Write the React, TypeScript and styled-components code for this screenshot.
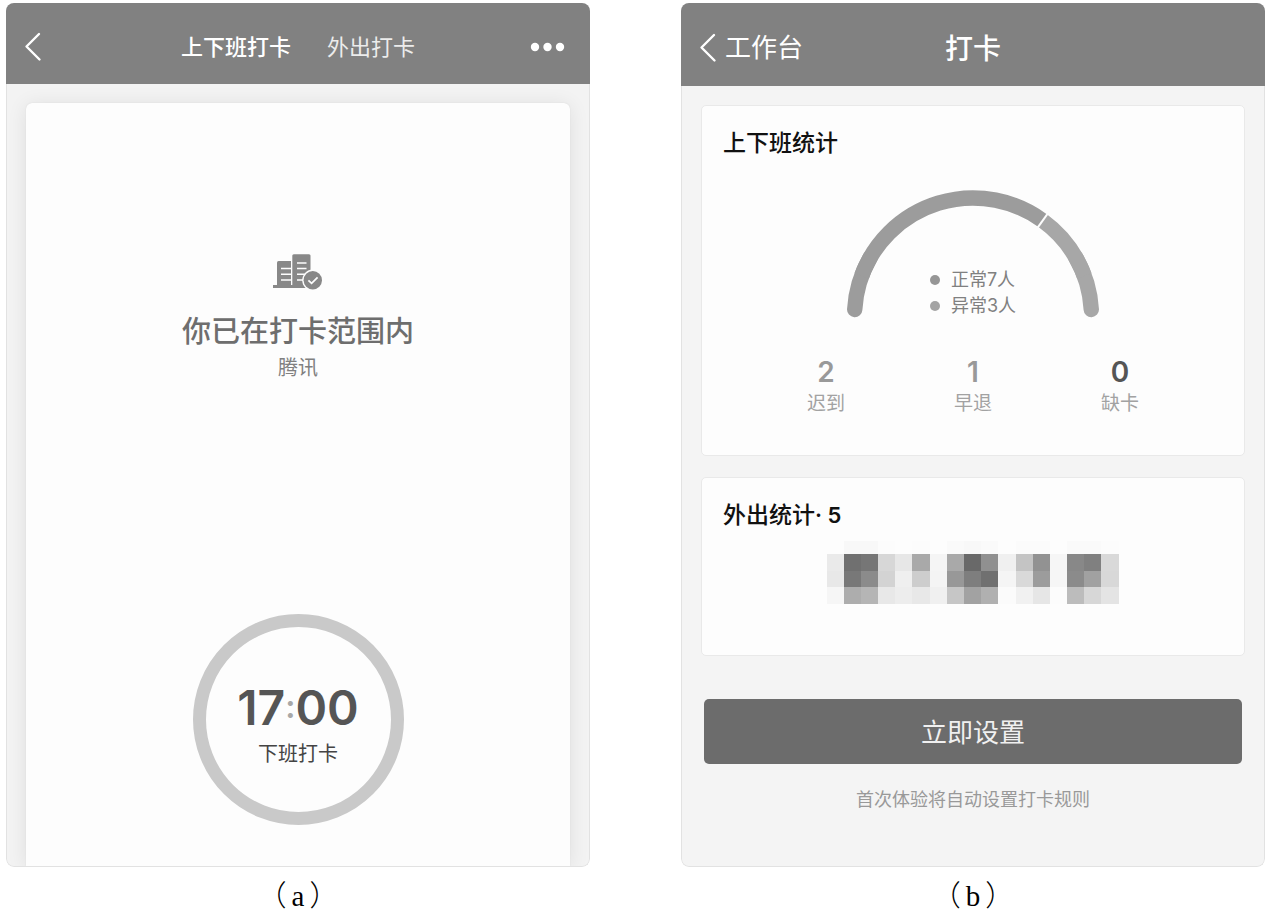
import React from "react";
import styled, { createGlobalStyle } from "styled-components";

const GlobalStyle = createGlobalStyle`
  * { box-sizing: border-box; }
  body {
    margin: 0;
    background: #fff;
    font-family: Inter, "Noto Sans CJK SC", sans-serif;
  }
  button { font: inherit; border: 0; background: none; padding: 0; cursor: pointer; }
  h1, h2, p, dl, dd, dt, figure { margin: 0; font-weight: 400; }
  svg { display: block; }
`;

const Page = styled.main`
  display: grid;
  grid-template-columns: 1fr 1fr;
  column-gap: 91px;
  padding: 3px 12px 0 6px;
`;

const Figure = styled.figure`
  display: flex;
  flex-direction: column;
  min-width: 0;
`;

const Caption = styled.figcaption`
  margin-top: 12px;
  text-align: center;
  font-family: "Liberation Serif", "Noto Sans CJK SC", serif;
  font-size: 29px;
  font-weight: 300;
  line-height: 34px;
  color: #000;
`;

const CaptionLetter = styled.span`
  margin: 0 5px;
`;

const Phone = styled.section`
  flex: 1;
  display: flex;
  flex-direction: column;
  border-radius: 8px;
  overflow: hidden;
`;

const Header = styled.header<{ $height: number }>`
  display: grid;
  grid-template-columns: 1fr auto 1fr;
  align-items: center;
  min-height: ${(p) => p.$height}px;
  padding: 6px 18px 0;
  background: #818181;
  color: #fff;
`;

const BackButton = styled.button`
  display: flex;
  align-items: center;
  justify-self: start;
  gap: 6px;
  color: #fff;
  font-size: 26px;
  line-height: 36px;
`;

const MoreButton = styled.button`
  justify-self: end;
  color: #fff;
`;

const Tabs = styled.nav`
  display: flex;
  gap: 36px;
`;

const Tab = styled.button<{ $active?: boolean }>`
  color: ${(p) => (p.$active ? "#fff" : "#ececec")};
  font-size: 22px;
  font-weight: ${(p) => (p.$active ? 500 : 400)};
  line-height: 32px;
`;

const HeaderTitle = styled.h1`
  padding-top: 2px;
  font-size: 28px;
  font-weight: 500;
  line-height: 36px;
`;

const Body = styled.div<{ $flush?: boolean }>`
  flex: 1;
  display: flex;
  flex-direction: column;
  padding: ${(p) => (p.$flush ? "19px 19px 0" : "19px 19px 53px")};
  border: 1px solid #e2e2e2;
  border-top: 0;
  border-radius: 0 0 8px 8px;
  overflow: hidden;
  background: ${(p) => (p.$flush ? "#f3f3f3" : "#f4f4f4")};
`;

const PunchCard = styled.div`
  flex: 1;
  display: flex;
  flex-direction: column;
  align-items: center;
  padding: 151px 20px 41px;
  border-radius: 6px 6px 0 0;
  background: #fdfdfd;
  box-shadow: 0 0 1px #ccc, 0 2px 20px rgba(0, 0, 0, 0.09);
`;

const RangeTitle = styled.h2`
  margin-top: 22px;
  color: #6e6e6e;
  font-size: 29px;
  font-weight: 500;
  line-height: 40px;
`;

const Company = styled.p`
  margin-top: 2px;
  color: #808080;
  font-size: 20px;
  line-height: 28px;
`;

const PunchButton = styled.button`
  display: flex;
  flex-direction: column;
  align-items: center;
  width: 211px;
  height: 211px;
  margin-top: 232px;
  padding-top: 56px;
  border: 13px solid #c9c9c9;
  border-radius: 50%;
  background: #fdfdfd;
`;

const Time = styled.span`
  color: #555;
  font-size: 48px;
  font-weight: 600;
  line-height: 50px;
`;

const Colon = styled.span`
  color: #a8a8a8;
  font-size: 32px;
  line-height: 1;
  vertical-align: 7px;
`;

const PunchLabel = styled.span`
  margin-top: 7px;
  color: #444;
  font-size: 20px;
  line-height: 28px;
`;

const Card = styled.section<{ $bottom: number }>`
  display: flex;
  flex-direction: column;
  align-items: center;
  padding: 21px 21px ${(p) => p.$bottom}px;
  border: 1px solid #e9e9e9;
  border-radius: 5px;
  background: #fdfdfd;

  & + & { margin-top: 21px; }
`;

const CardTitle = styled.h2`
  align-self: stretch;
  color: #111;
  font-size: 23px;
  font-weight: 500;
  line-height: 32px;
`;

const CountFigure = styled.span`
  font-size: 22px;
  font-weight: 600;
`;

const Gauge = styled.div`
  display: grid;
  justify-items: center;
  align-items: end;
  margin-top: 30px;

  & > * { grid-area: 1 / 1; }
`;

const Legend = styled.ul`
  margin: 0;
  padding: 0;
  list-style: none;
`;

const LegendItem = styled.li<{ $color: string }>`
  display: flex;
  align-items: center;
  gap: 11px;
  color: #808080;
  font-size: 18px;
  line-height: 26px;

  &::before {
    content: "";
    width: 10px;
    height: 10px;
    border-radius: 50%;
    background: ${(p) => p.$color};
  }
`;

const Stats = styled.dl`
  display: grid;
  grid-template-columns: repeat(3, 147px);
  justify-content: center;
  margin-top: 37px;
  text-align: center;
`;

const Stat = styled.div`
  display: flex;
  flex-direction: column-reverse;
  gap: 3px;
`;

const StatValue = styled.dd<{ $strong?: boolean }>`
  color: ${(p) => (p.$strong ? "#555" : "#999")};
  font-size: 28px;
  font-weight: 600;
  line-height: 32px;
`;

const StatLabel = styled.dt`
  color: #a2a2a2;
  font-size: 19px;
  line-height: 26px;
`;

const MosaicWrap = styled.div`
  margin-top: 10px;
`;

const SetupButton = styled.button`
  height: 65px;
  margin: 43px 3px 0;
  padding-bottom: 2px;
  border-radius: 5px;
  background: #6c6c6c;
  color: #f0f0f0;
  font-size: 26px;
`;

const Hint = styled.p`
  margin-top: 23px;
  text-align: center;
  color: #999;
  font-size: 18px;
  line-height: 26px;
`;

const Chevron = () => (
  <svg width="20" height="30" viewBox="0 0 20 30" fill="none" stroke="#fff" strokeWidth="2.4" strokeLinecap="round" strokeLinejoin="round" aria-hidden="true">
    <path d="M15 2L2.500 14.500l13 13" />
  </svg>
);

const Dots = () => (
  <svg width="42" height="12" viewBox="0 0 42 12" fill="#fff" aria-hidden="true">
    <circle cx="5" cy="6" r="4.200" />
    <circle cx="17.500" cy="6" r="4.200" />
    <circle cx="30" cy="6" r="4.200" />
  </svg>
);

const OfficeIcon = () => (
  <svg width="50" height="36" viewBox="0 0 50 36" aria-hidden="true">
    <g fill="#888">
      <path d="M4 31V8.500Q4 7 5.500 7H18V31z" />
      <path d="M19.300 31V1.800Q19.300 0.300 20.800 0.300H36Q37.500 0.300 37.500 1.800V31z" />
      <path d="M0 31H40V34H0z" />
    </g>
    <g stroke="#fdfdfd" strokeWidth="1.400">
      <path d="M8 14.500H18M8 20.200H18M8 26H18" />
      <path d="M24 9H33.500M24 14.500H33.500M24 20.200H33.500M24 26H33.500" />
    </g>
    <circle cx="39.800" cy="26.200" r="10.600" fill="#fdfdfd" />
    <circle cx="39.800" cy="26.200" r="9.200" fill="#888" />
    <path d="M35.400 26.300l3.200 3.100 6-6" fill="none" stroke="#fdfdfd" strokeWidth="1.700" />
  </svg>
);

const GAUGE = { cx: 127, cy: 127.5, r: 118.5 };

function point(deg: number, r = GAUGE.r) {
  const a = (deg * Math.PI) / 180;
  return `${(GAUGE.cx + r * Math.cos(a)).toFixed(2)} ${(GAUGE.cy - r * Math.sin(a)).toFixed(2)}`;
}

function arc(from: number, to: number) {
  return `M${point(from)}A${GAUGE.r} ${GAUGE.r} 0 0 1 ${point(to)}`;
}

const GaugeArc = () => (
  <svg width="254" height="130" viewBox="0 0 254 130" fill="none" strokeWidth="15.4" aria-hidden="true">
    <path d={arc(176.6, 150)} stroke="#9c9c9c" strokeLinecap="round" />
    <path d={arc(30, 3.4)} stroke="#a7a7a7" strokeLinecap="round" />
    <path d={arc(160, 54)} stroke="#9c9c9c" />
    <path d={arc(54, 20)} stroke="#a7a7a7" />
    <path d={`M${point(54, 109)}L${point(54, 128)}`} stroke="#fdfdfd" strokeWidth="2" />
  </svg>
);

const COLS = [0, 17, 34, 51, 68, 85, 103, 120, 137, 154, 171, 189, 206, 223, 240, 257, 274, 292];
const ROWS = [0, 13, 30, 46, 63];
const SHADES = [
  "fd f8 f8 fc fd fc fd fa f8 fa fd fb fb fd fa fa fc",
  "ea 70 76 d7 e7 a9 f5 a9 69 90 f0 c4 92 f6 88 80 d9",
  "e8 78 8b d3 ef cd f4 98 7e 70 f5 d9 9c f6 8b a1 d8",
  "f6 ad b5 e8 ed e8 f0 c6 a2 b0 fb f1 e6 fc bc d7 e4",
].map((row) => row.split(" "));

const Mosaic = () => (
  <svg width="292" height="63" viewBox="0 0 292 63" shapeRendering="crispEdges" aria-hidden="true">
    {SHADES.map((row, y) =>
      row.map((s, x) => (
        <rect
          key={`${x}-${y}`}
          x={COLS[x]}
          y={ROWS[y]}
          width={COLS[x + 1] - COLS[x]}
          height={ROWS[y + 1] - ROWS[y]}
          fill={`#${s}${s}${s}`}
        />
      ))
    )}
  </svg>
);

const STATS = [
  { value: 2, label: "迟到" },
  { value: 1, label: "早退" },
  { value: 0, label: "缺卡" },
];

export default function App() {
  return (
    <>
      <GlobalStyle />
      <Page lang="zh-CN">
        <Figure>
          <Phone>
            <Header $height={81}>
              <BackButton aria-label="返回">
                <Chevron />
              </BackButton>
              <Tabs>
                <Tab $active>上下班打卡</Tab>
                <Tab>外出打卡</Tab>
              </Tabs>
              <MoreButton aria-label="更多">
                <Dots />
              </MoreButton>
            </Header>
            <Body $flush>
              <PunchCard>
                <OfficeIcon />
                <RangeTitle>你已在打卡范围内</RangeTitle>
                <Company>腾讯</Company>
                <PunchButton>
                  <Time>
                    17<Colon>:</Colon>00
                  </Time>
                  <PunchLabel>下班打卡</PunchLabel>
                </PunchButton>
              </PunchCard>
            </Body>
          </Phone>
          <Caption>
            （<CaptionLetter>a</CaptionLetter>）
          </Caption>
        </Figure>

        <Figure>
          <Phone>
            <Header $height={83}>
              <BackButton>
                <Chevron />
                工作台
              </BackButton>
              <HeaderTitle>打卡</HeaderTitle>
            </Header>
            <Body>
              <Card $bottom={38}>
                <CardTitle>上下班统计</CardTitle>
                <Gauge>
                  <GaugeArc />
                  <Legend>
                    <LegendItem $color="#969696">正常7人</LegendItem>
                    <LegendItem $color="#a4a4a4">异常3人</LegendItem>
                  </Legend>
                </Gauge>
                <Stats>
                  {STATS.map((s) => (
                    <Stat key={s.label}>
                      <StatLabel>{s.label}</StatLabel>
                      <StatValue $strong={s.value === 0}>{s.value}</StatValue>
                    </Stat>
                  ))}
                </Stats>
              </Card>
              <Card $bottom={51}>
                <CardTitle>
                  外出统计<CountFigure>· 5</CountFigure>
                </CardTitle>
                <MosaicWrap>
                  <Mosaic />
                </MosaicWrap>
              </Card>
              <SetupButton>立即设置</SetupButton>
              <Hint>首次体验将自动设置打卡规则</Hint>
            </Body>
          </Phone>
          <Caption>
            （<CaptionLetter>b</CaptionLetter>）
          </Caption>
        </Figure>
      </Page>
    </>
  );
}
